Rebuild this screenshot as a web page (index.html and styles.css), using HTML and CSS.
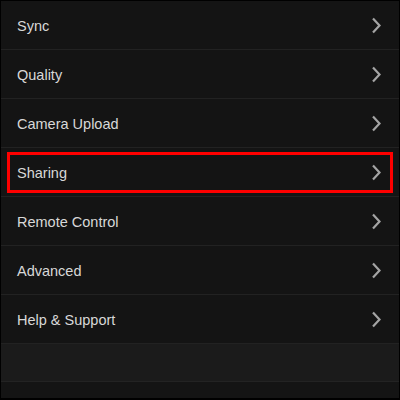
FILE: index.html
```html
<!DOCTYPE html>
<html>
<head>
<meta charset="utf-8">
<link rel="stylesheet" href="styles.css">
</head>
<body>
<div class="screen">
  <ul class="menu">
    <li class="row"><span class="label">Sync</span><svg class="chev" viewBox="0 0 11 17"><path d="M2 1.5 L8.5 8.5 L2 15.5"/></svg></li>
    <li class="row"><span class="label">Quality</span><svg class="chev" viewBox="0 0 11 17"><path d="M2 1.5 L8.5 8.5 L2 15.5"/></svg></li>
    <li class="row"><span class="label">Camera Upload</span><svg class="chev" viewBox="0 0 11 17"><path d="M2 1.5 L8.5 8.5 L2 15.5"/></svg></li>
    <li class="row highlighted"><span class="label">Sharing</span><svg class="chev" viewBox="0 0 11 17"><path d="M2 1.5 L8.5 8.5 L2 15.5"/></svg></li>
    <li class="row"><span class="label">Remote Control</span><svg class="chev" viewBox="0 0 11 17"><path d="M2 1.5 L8.5 8.5 L2 15.5"/></svg></li>
    <li class="row"><span class="label">Advanced</span><svg class="chev" viewBox="0 0 11 17"><path d="M2 1.5 L8.5 8.5 L2 15.5"/></svg></li>
    <li class="row"><span class="label">Help &amp; Support</span><svg class="chev" viewBox="0 0 11 17"><path d="M2 1.5 L8.5 8.5 L2 15.5"/></svg></li>
  </ul>
  <div class="band"></div>
  <div class="footer"></div>
</div>
</body>
</html>
```
FILE: styles.css
```css
html, body {
  margin: 0;
  padding: 0;
  background: #000;
}
.screen {
  width: 400px;
  height: 400px;
  box-sizing: border-box;
  border: 1px solid #000;
  border-bottom-width: 2px;
  background: #141414;
  display: flex;
  flex-direction: column;
  font-family: "Liberation Sans", Arial, sans-serif;
}
.menu {
  list-style: none;
  margin: 0;
  padding: 0;
}
.row {
  position: relative;
  height: 48px;
  border-bottom: 1px solid #222;
  display: flex;
  align-items: center;
  justify-content: space-between;
  padding: 0 17px 0 16px;
  color: #d8d8d8;
  font-size: 14.5px;
}
.label {
  padding-top: 1px;
}
.chev {
  width: 11px;
  height: 17px;
  fill: none;
  stroke: #a4a4a4;
  stroke-width: 2.2;
  stroke-linecap: butt;
  stroke-linejoin: miter;
}
.highlighted::after {
  content: "";
  position: absolute;
  top: 4px;
  left: 6px;
  right: 6px;
  bottom: 3px;
  border: 3px solid #f00;
}
.band {
  height: 37px;
  background: #1b1b1b;
  border-bottom: 1px solid #232323;
}
.footer {
  flex: 1;
  background: #141414;
}
```
